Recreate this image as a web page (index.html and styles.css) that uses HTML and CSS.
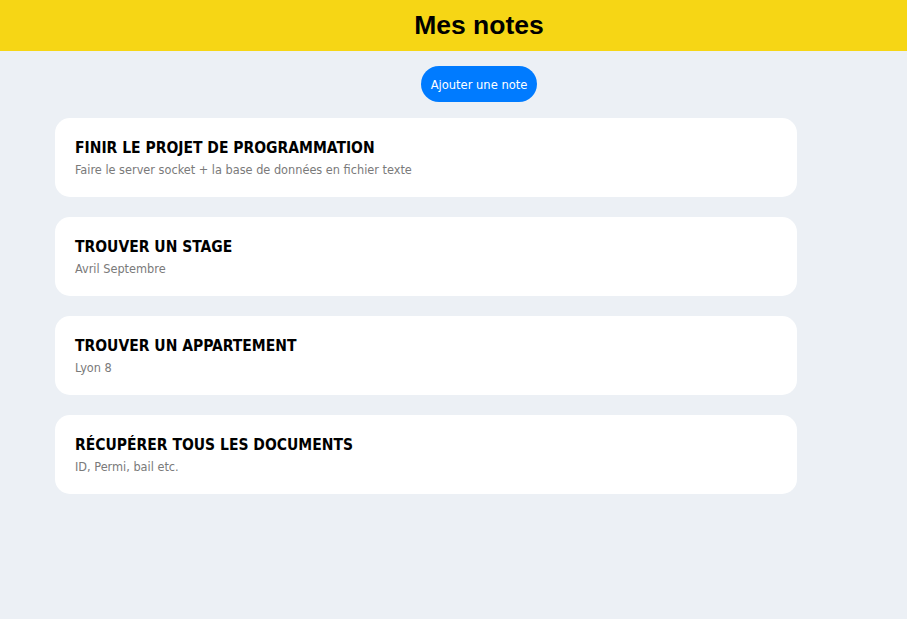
FILE: index.html
```html
<!DOCTYPE html>
<html lang="fr">
<head>
<meta charset="utf-8">
<title>Mes notes</title>
<link rel="stylesheet" href="styles.css">
</head>
<body>
<header class="topbar">
  <h1 class="topbar-title">Mes notes</h1>
</header>
<main class="page">
  <div class="actions">
    <button class="add-btn" type="button">Ajouter une note</button>
  </div>
  <section class="notes">
    <article class="note">
      <h2 class="note-title">FINIR LE PROJET DE PROGRAMMATION</h2>
      <p class="note-text">Faire le server socket + la base de données en fichier texte</p>
    </article>
    <article class="note">
      <h2 class="note-title">TROUVER UN STAGE</h2>
      <p class="note-text">Avril Septembre</p>
    </article>
    <article class="note">
      <h2 class="note-title">TROUVER UN APPARTEMENT</h2>
      <p class="note-text">Lyon 8</p>
    </article>
    <article class="note">
      <h2 class="note-title">RÉCUPÉRER TOUS LES DOCUMENTS</h2>
      <p class="note-text">ID, Permi, bail etc.</p>
    </article>
  </section>
</main>
</body>
</html>
```

FILE: styles.css
```css
* { box-sizing: border-box; }
html, body { margin: 0; padding: 0; }
body {
  background: #ecf0f5;
  font-family: "DejaVu Sans Condensed", "DejaVu Sans", sans-serif;
  min-height: 619px;
}
.topbar {
  background: #f6d615;
  height: 51px;
  display: flex;
  align-items: center;
  justify-content: center;
  padding-left: 51px;
}
.topbar-title {
  margin: 0;
  font-family: "Liberation Sans", Arial, sans-serif;
  font-weight: bold;
  font-size: 26.5px;
  color: #000;
}
.page {
  padding: 15px 0 0 55px;
}
.actions {
  display: flex;
  justify-content: center;
  width: 848px;
  margin-bottom: 16px;
}
.add-btn {
  background: #007bff;
  color: #fff;
  border: none;
  border-radius: 18px;
  height: 36px;
  width: 116px;
  font-family: "DejaVu Sans Condensed", "DejaVu Sans", sans-serif;
  font-size: 12.8px;
  padding: 0;
}
.notes {
  display: flex;
  flex-direction: column;
  gap: 20px;
  width: 742px;
}
.note {
  background: #fff;
  border-radius: 15px;
  height: 79px;
  padding: 21px 20px 0;
}
.note-title {
  margin: 0;
  font-size: 15.5px;
  font-weight: bold;
  color: #000;
  line-height: 19px;
}
.note-text {
  margin: 4px 0 0;
  font-size: 12.6px;
  color: #7a7a7a;
  line-height: 16px;
}
```
